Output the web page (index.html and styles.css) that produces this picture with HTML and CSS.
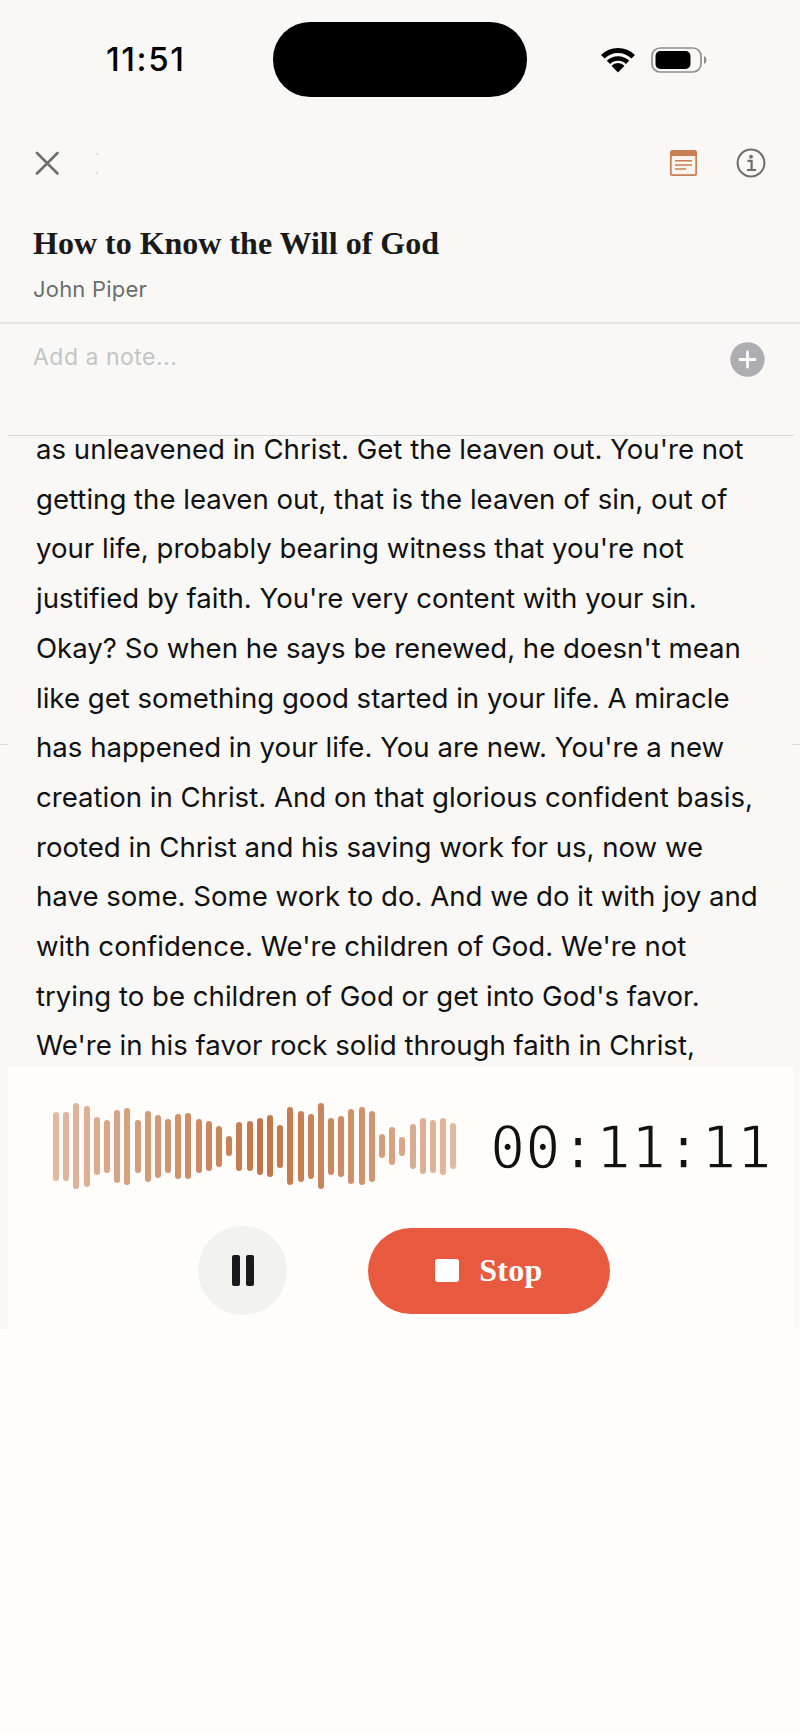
FILE: index.html
```html
<!DOCTYPE html>
<html>
<head>
    <title>How to Know the Will of God</title>
    <link rel="stylesheet" href="styles.css">
</head>
<body>
    <div id="screen">
        <div class="stub stub-left"></div>
        <div class="stub stub-right"></div>

        <div class="status">
            <div class="time">11:51</div>
            <div class="island"></div>
            <div class="status-icons">
                <svg width="34" height="26" viewBox="0 0 34 26">
                    <path d="M1.8 9.8A21.5 21.5 0 0 1 32.2 9.8" fill="none" stroke="#000" stroke-width="5"/>
                    <path d="M7.45 15.45A13.5 13.5 0 0 1 26.55 15.45" fill="none" stroke="#000" stroke-width="4.6"/>
                    <path d="M17 25.5L10.5 18.8A9.2 9.2 0 0 1 23.5 18.8Z" fill="#000"/>
                </svg>
                <svg width="56" height="26" viewBox="0 0 56 26">
                    <rect x="1" y="1" width="49" height="24" rx="8" fill="none" stroke="#8f8f8f" stroke-width="1.7"/>
                    <rect x="4.5" y="4" width="35" height="18" rx="5" fill="#000"/>
                    <path d="M53 9C55 10 55.5 11.5 55.5 13S55 16 53 17Z" fill="#8f8f8f"/>
                </svg>
            </div>
        </div>

        <div class="toolbar">
            <svg class="close" width="24" height="24" viewBox="0 0 24 24">
                <path d="M2 2L22.5 22.5M22.5 2L2 22.5" stroke="#6e6e6e" stroke-width="2.6" stroke-linecap="round"/>
            </svg>
            <div class="faint-dots"><i></i><i></i></div>
            <svg class="sheet" width="27" height="26" viewBox="0 0 27 26">
                <rect width="27" height="26" rx="2.5" fill="#c97f56"/>
                <rect x="1.7" y="6" width="23.6" height="18.3" rx="1" fill="#fbf4ef"/>
                <path d="M5 10.7H22M5 14.9H22M5 19H16" stroke="#c97f56" stroke-width="1.5"/>
            </svg>
            <svg class="info" width="30" height="30" viewBox="0 0 30 30">
                <circle cx="15" cy="15" r="13.4" fill="none" stroke="#6e6e6e" stroke-width="2"/>
                <circle cx="15" cy="8.7" r="1.9" fill="#6e6e6e"/>
                <path d="M11.5 12.9H15.6V21.6M11 22H20" fill="none" stroke="#6e6e6e" stroke-width="2.2"/>
            </svg>
        </div>

        <div class="heading">
            <h1>How to Know the Will of God</h1>
            <div class="author">John Piper</div>
        </div>

        <div class="note">
            <div class="note-hint">Add a note...</div>
            <svg width="35" height="35" viewBox="0 0 35 35">
                <circle cx="17.5" cy="17.5" r="17.2" fill="#adadb2"/>
                <path d="M17.5 10V25M10 17.5H25" stroke="#fff" stroke-width="2.8" stroke-linecap="round"/>
            </svg>
        </div>

        <div class="rule"></div>

        <div class="transcript">
            <p>as unleavened in Christ. Get the leaven out. You're not<br>
            getting the leaven out, that is the leaven of sin, out of<br>
            your life, probably bearing witness that you're not<br>
            justified by faith. You're very content with your sin.<br>
            Okay? So when he says be renewed, he doesn't mean<br>
            like get something good started in your life. A miracle<br>
            has happened in your life. You are new. You're a new<br>
            creation in Christ. And on that glorious confident basis,<br>
            rooted in Christ and his saving work for us, now we<br>
            have some. Some work to do. And we do it with joy and<br>
            with confidence. We're children of God. We're not<br>
            trying to be children of God or get into God's favor.<br>
            We're in his favor rock solid through faith in Christ,</p>
        </div>

        <div class="recorder">
            <div class="meter">
                <div class="wave">
                    <span style="height:69px;opacity:.5"></span>
                    <span style="height:69px;opacity:.52"></span>
                    <span style="height:86px;opacity:.54"></span>
                    <span style="height:81px;opacity:.57"></span>
                    <span style="height:58px;opacity:.6"></span>
                    <span style="height:53px;opacity:.63"></span>
                    <span style="height:73px;opacity:.66"></span>
                    <span style="height:77px;opacity:.69"></span>
                    <span style="height:53px;opacity:.71"></span>
                    <span style="height:71px;opacity:.73"></span>
                    <span style="height:63px;opacity:.75"></span>
                    <span style="height:54px;opacity:.77"></span>
                    <span style="height:65px;opacity:.8"></span>
                    <span style="height:66px;opacity:.82"></span>
                    <span style="height:54px;opacity:.84"></span>
                    <span style="height:50px;opacity:.86"></span>
                    <span style="height:41px;opacity:.88"></span>
                    <span style="height:20px;opacity:.9"></span>
                    <span style="height:49px;opacity:.94"></span>
                    <span style="height:50px;opacity:.96"></span>
                    <span style="height:57px;opacity:1"></span>
                    <span style="height:62px;opacity:.98"></span>
                    <span style="height:43px;opacity:.96"></span>
                    <span style="height:78px;opacity:.94"></span>
                    <span style="height:71px;opacity:.92"></span>
                    <span style="height:65px;opacity:.9"></span>
                    <span style="height:86px;opacity:.88"></span>
                    <span style="height:57px;opacity:.86"></span>
                    <span style="height:61px;opacity:.84"></span>
                    <span style="height:75px;opacity:.8"></span>
                    <span style="height:78px;opacity:.78"></span>
                    <span style="height:71px;opacity:.76"></span>
                    <span style="height:24px;opacity:.7"></span>
                    <span style="height:38px;opacity:.67"></span>
                    <span style="height:19px;opacity:.64"></span>
                    <span style="height:45px;opacity:.6"></span>
                    <span style="height:56px;opacity:.57"></span>
                    <span style="height:53px;opacity:.54"></span>
                    <span style="height:57px;opacity:.52"></span>
                    <span style="height:46px;opacity:.5"></span>
                </div>
                <div class="timer">00:11:11</div>
            </div>
            <div class="controls">
                <button class="pause"><i></i><i></i></button>
                <button class="stop"><i></i>Stop</button>
            </div>
        </div>

        <div class="bottom-fill"></div>
    </div>
</body>
</html>
```

FILE: styles.css
```css
BODY {
    margin: 0;
    padding: 0;
}
#screen {
    position: relative;
    display: flex;
    flex-direction: column;
    width: 800px;
    height: 1734px;
    overflow: hidden;
    background: #f9f8f6;
    font-family: Inter, sans-serif;
}

/* status bar */
.status {
    display: flex;
    align-items: center;
    height: 75px;
    padding-top: 22px;
    flex: none;
}
.time {
    width: 273px;
    padding-left: 106px;
    box-sizing: border-box;
    font-size: 33px;
    font-weight: 500;
    letter-spacing: 1.6px;
    color: #000;
    line-height: 75px;
}
.island {
    width: 254px;
    height: 75px;
    border-radius: 37px;
    background: #000;
}
.status-icons {
    display: flex;
    align-items: center;
    gap: 16px;
    margin-left: 74px;
}

/* toolbar */
.toolbar {
    display: flex;
    align-items: center;
    height: 30px;
    margin-top: 51px;
    padding-left: 35px;
    flex: none;
}
.close {
    margin-right: 37px;
}
.faint-dots {
    display: flex;
    flex-direction: column;
    gap: 17px;
}
.faint-dots i {
    display: block;
    width: 2px;
    height: 2px;
    background: #ddd;
}
.sheet {
    margin-left: auto;
}
.info {
    margin: 0 34px 0 39px;
}

/* title */
.heading {
    padding: 0 33px;
    height: 144px;
    box-sizing: border-box;
    flex: none;
}
h1 {
    margin: 46px 0 0 0;
    font-family: "Liberation Serif", serif;
    font-size: 32px;
    font-weight: bold;
    line-height: 38px;
    color: #1a1a1a;
}
.author {
    margin-top: 13px;
    font-size: 22px;
    letter-spacing: 0.2px;
    line-height: 28px;
    color: #6d6d6d;
}

/* note input */
.note {
    display: flex;
    justify-content: space-between;
    height: 113px;
    padding: 18px 35px 0 33px;
    box-sizing: border-box;
    border-top: solid 2px #e6e5e3;
    flex: none;
}
.note-hint {
    margin-top: -1px;
    font-size: 23px;
    letter-spacing: 0.5px;
    line-height: 32px;
    color: #c4c4c4;
}
.rule {
    height: 1px;
    margin: 0 6px 0 8px;
    background: #d9d9d8;
    flex: none;
}

/* transcript, scrolled so the first line sits just under the rule */
.transcript {
    height: 642px;
    margin: -11px 6px 0 8px;
    padding-left: 28px;
    flex: none;
}
.transcript P {
    margin: 0;
    font-size: 27.6px;
    line-height: 49.7px;
    color: #111;
    white-space: nowrap;
}
.stub {
    position: absolute;
    top: 744px;
    width: 8px;
    height: 1px;
    background: #dcdcdb;
}
.stub-left {
    left: 0;
}
.stub-right {
    right: 0;
}

/* recorder */
.recorder {
    position: relative;
    height: 262px;
    margin: 0 6px 0 8px;
    background: #fffdfb;
    flex: none;
}
.meter {
    display: flex;
    align-items: center;
    height: 158px;
    padding-left: 45px;
}
.wave {
    display: flex;
    align-items: center;
    gap: 4.2px;
    width: 408px;
}
.wave SPAN {
    display: block;
    width: 6px;
    border-radius: 3px;
    background: #c27546;
    flex: none;
}
.timer {
    margin: 4px 0 0 29px;
    font-family: "DejaVu Sans Mono", monospace;
    font-size: 58.5px;
    line-height: 70px;
    color: #111;
    -webkit-text-stroke: 1.6px #fffdfb;
}
.controls {
    display: flex;
    align-items: center;
    gap: 81px;
    margin-top: 1px;
    padding-left: 190px;
}
BUTTON {
    display: flex;
    align-items: center;
    justify-content: center;
    border: none;
    padding: 0;
}
.pause {
    width: 89px;
    height: 89px;
    gap: 6px;
    border-radius: 50%;
    background: #f2f2ef;
}
.pause I {
    display: block;
    width: 8px;
    height: 31px;
    border-radius: 2px;
    background: #1a1a1c;
}
.stop {
    width: 242px;
    height: 86px;
    gap: 20px;
    border-radius: 43px;
    background: #e75a40;
    font-family: "Liberation Serif", serif;
    font-size: 32px;
    font-weight: bold;
    letter-spacing: 0.3px;
    color: #fff;
}
.stop I {
    display: block;
    width: 24px;
    height: 23px;
    border-radius: 3px;
    background: #fff;
}
.bottom-fill {
    flex: 1;
    background: #fffdfb;
}
```
